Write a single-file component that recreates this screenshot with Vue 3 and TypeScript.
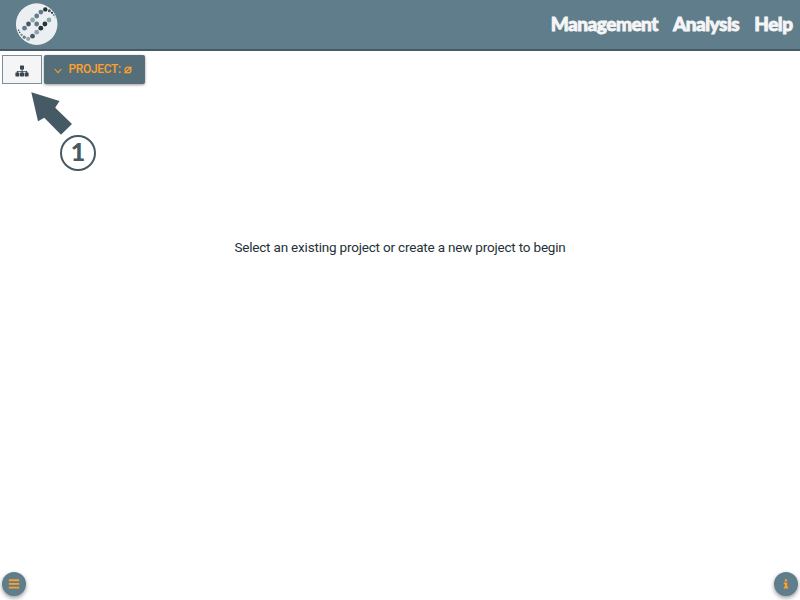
<script setup lang="ts">
interface Dot {
  x: number
  y: number
  r: number
  c: string
}

const slate = '#5f7d8a'
const light = '#90a4ae'
const deep = '#455a64'
const dark = '#263238'

const dots: Dot[] = [
  { x: 24.5, y: 28.2, r: 2.4, c: slate },
  { x: 28.5, y: 24, r: 2.4, c: deep },
  { x: 32.6, y: 20, r: 2.4, c: light },
  { x: 36.7, y: 16, r: 2.4, c: slate },
  { x: 40.9, y: 12.1, r: 2.4, c: slate },
  { x: 45.3, y: 9.4, r: 2.2, c: dark },
  { x: 49.4, y: 10.8, r: 1.5, c: deep },
  { x: 52, y: 12.8, r: 1.1, c: dark },
  { x: 53.8, y: 15, r: 0.9, c: slate },
  { x: 55, y: 17.2, r: 0.6, c: light },
  { x: 36.7, y: 24, r: 2.4, c: slate },
  { x: 49, y: 20, r: 2.4, c: light },
  { x: 44.9, y: 24, r: 2.4, c: dark },
  { x: 40.8, y: 28.2, r: 2.4, c: dark },
  { x: 36.7, y: 32.2, r: 2.4, c: light },
  { x: 32.5, y: 36.2, r: 2.4, c: deep },
  { x: 28.2, y: 38.8, r: 2.1, c: light },
  { x: 24.2, y: 37.2, r: 1.6, c: slate },
  { x: 21.6, y: 34.8, r: 1.1, c: slate },
  { x: 19.7, y: 32.4, r: 0.8, c: deep },
  { x: 18.6, y: 30.2, r: 0.7, c: dark },
]

const links: string[] = ['Management', 'Analysis', 'Help']
</script>

<template>
  <div class="page">
    <header class="bar">
      <svg class="logo" viewBox="15 3 44 44" width="44" height="44">
        <circle cx="36.7" cy="24.1" r="20.8" fill="#eceff1" />
        <circle v-for="(d, i) in dots" :key="i" :cx="d.x" :cy="d.y" :r="d.r" :fill="d.c" />
      </svg>
      <nav class="nav">
        <a v-for="l in links" :key="l">{{ l }}</a>
      </nav>
    </header>

    <div class="tools">
      <button class="tree" aria-label="Hierarchy">
        <svg width="14" height="12" viewBox="0 0 14 12" fill="#37474f">
          <rect x="5" y="0.5" width="4" height="4" rx="0.6" />
          <path d="M6.5 4h1v1.9h4.7v2h-1V6.8H7.5v1.1h-1V6.8H2.8v1.1h-1v-2h4.7z" />
          <rect x="0.4" y="7.4" width="4" height="4" rx="0.6" />
          <rect x="5" y="7.4" width="4" height="4" rx="0.6" />
          <rect x="9.6" y="7.4" width="4" height="4" rx="0.6" />
        </svg>
      </button>
      <button class="project">
        <svg class="chevron" width="8" height="6" viewBox="0 0 8 6" fill="none" stroke="#ffa02d" stroke-width="1.1">
          <path d="M0.7 1L4 4.6L7.3 1" />
        </svg>
        <span class="label">PROJECT:</span>
        <svg class="empty" width="8" height="8" viewBox="0 0 8 8" fill="none" stroke="#ffa02d" stroke-width="1.3">
          <ellipse cx="4" cy="4" rx="3" ry="2.9" />
          <path d="M0.5 7.3L7.5 0.7" />
        </svg>
      </button>
    </div>

    <main class="message">Select an existing project or create a new project to begin</main>

    <footer class="foot">
      <button class="round" aria-label="Menu">
        <svg width="12" height="10" viewBox="0 0 12 10" stroke="#ffa02d" stroke-width="1.9">
          <path d="M0.8 1.2H11.2M0.8 4.9H11.2M0.8 8.6H11.2" />
        </svg>
      </button>
      <button class="round" aria-label="Info">
        <svg width="6" height="10" viewBox="0 0 6 10" fill="#ffa02d">
          <path d="M1.8 0.3h2.3v2.3H1.8zM0.8 3.5h3.4v4.2h1v1.7H0.8V7.7h1V5.2h-1z" />
        </svg>
      </button>
    </footer>

    <div class="callout">
      <svg width="42" height="44" viewBox="30 91 42 44" fill="#455a64">
        <path d="M31.3 92.3L59.5 101L55.2 107.8L72 124L61 134.7L44.3 117.8L38 121.3Z" />
      </svg>
      <span class="step">1</span>
    </div>
  </div>
</template>

<style>
body {
  background: #fff;
  overflow: hidden;
}
</style>

<style scoped>
.page {
  position: relative;
  box-sizing: border-box;
  height: 600px;
  display: flex;
  flex-direction: column;
  font-family: Roboto, sans-serif;
}
.bar {
  box-sizing: border-box;
  height: 51px;
  flex: none;
  display: flex;
  justify-content: space-between;
  align-items: flex-start;
  padding: 3px 7.5px 0 15px;
  background: #5f7d8a;
  border-bottom: 2px solid #455a64;
}
.logo {
  display: block;
}
.nav {
  display: flex;
  gap: 15px;
  padding-top: 9px;
  font: 900 19px/24px Lato, sans-serif;
  letter-spacing: -0.5px;
  -webkit-text-stroke: 0.8px #f5f5f5;
  color: #f5f5f5;
}
.tools {
  display: flex;
  gap: 2px;
  padding: 4px 0 0 2px;
}
button {
  box-sizing: border-box;
  border: 0;
  padding: 0;
  display: flex;
  align-items: center;
  justify-content: center;
}
.tree {
  width: 40px;
  height: 29px;
  padding-top: 3px;
  background: #f5f5f5;
  border: 1px solid #78909c;
}
.project {
  width: 100.5px;
  height: 29px;
  justify-content: flex-start;
  padding: 0 0 1px 10px;
  background: #546e7a;
  border-radius: 2px;
  color: #ffa02d;
  font: 500 12px/16px Roboto, sans-serif;
  box-shadow: 0 1px 3px rgba(0, 0, 0, 0.4);
}
.chevron {
  margin-top: 3px;
}
.empty {
  margin-top: 1px;
}
.label {
  margin: 0 3px 0 6.5px;
  letter-spacing: -0.35px;
}
.message {
  flex: 1;
  padding-top: 155px;
  text-align: center;
  font-size: 13.5px;
  letter-spacing: -0.19px;
  line-height: 16px;
  color: #263238;
}
.foot {
  display: flex;
  justify-content: space-between;
  padding: 0 2px 4px;
}
.round {
  width: 24px;
  height: 24px;
  border-radius: 50%;
  background: #5f7d8a;
  box-shadow: 0 2px 4px rgba(0, 0, 0, 0.4);
}
.callout {
  position: absolute;
  left: 30px;
  top: 91px;
  display: flex;
  flex-direction: column;
}
.step {
  box-sizing: border-box;
  width: 36px;
  height: 36px;
  margin-left: 30px;
  border: 2px solid #455a64;
  border-radius: 50%;
  background: #fff;
  color: #455a64;
  font: 900 25px/29px Lato, sans-serif;
  text-align: center;
}
</style>
